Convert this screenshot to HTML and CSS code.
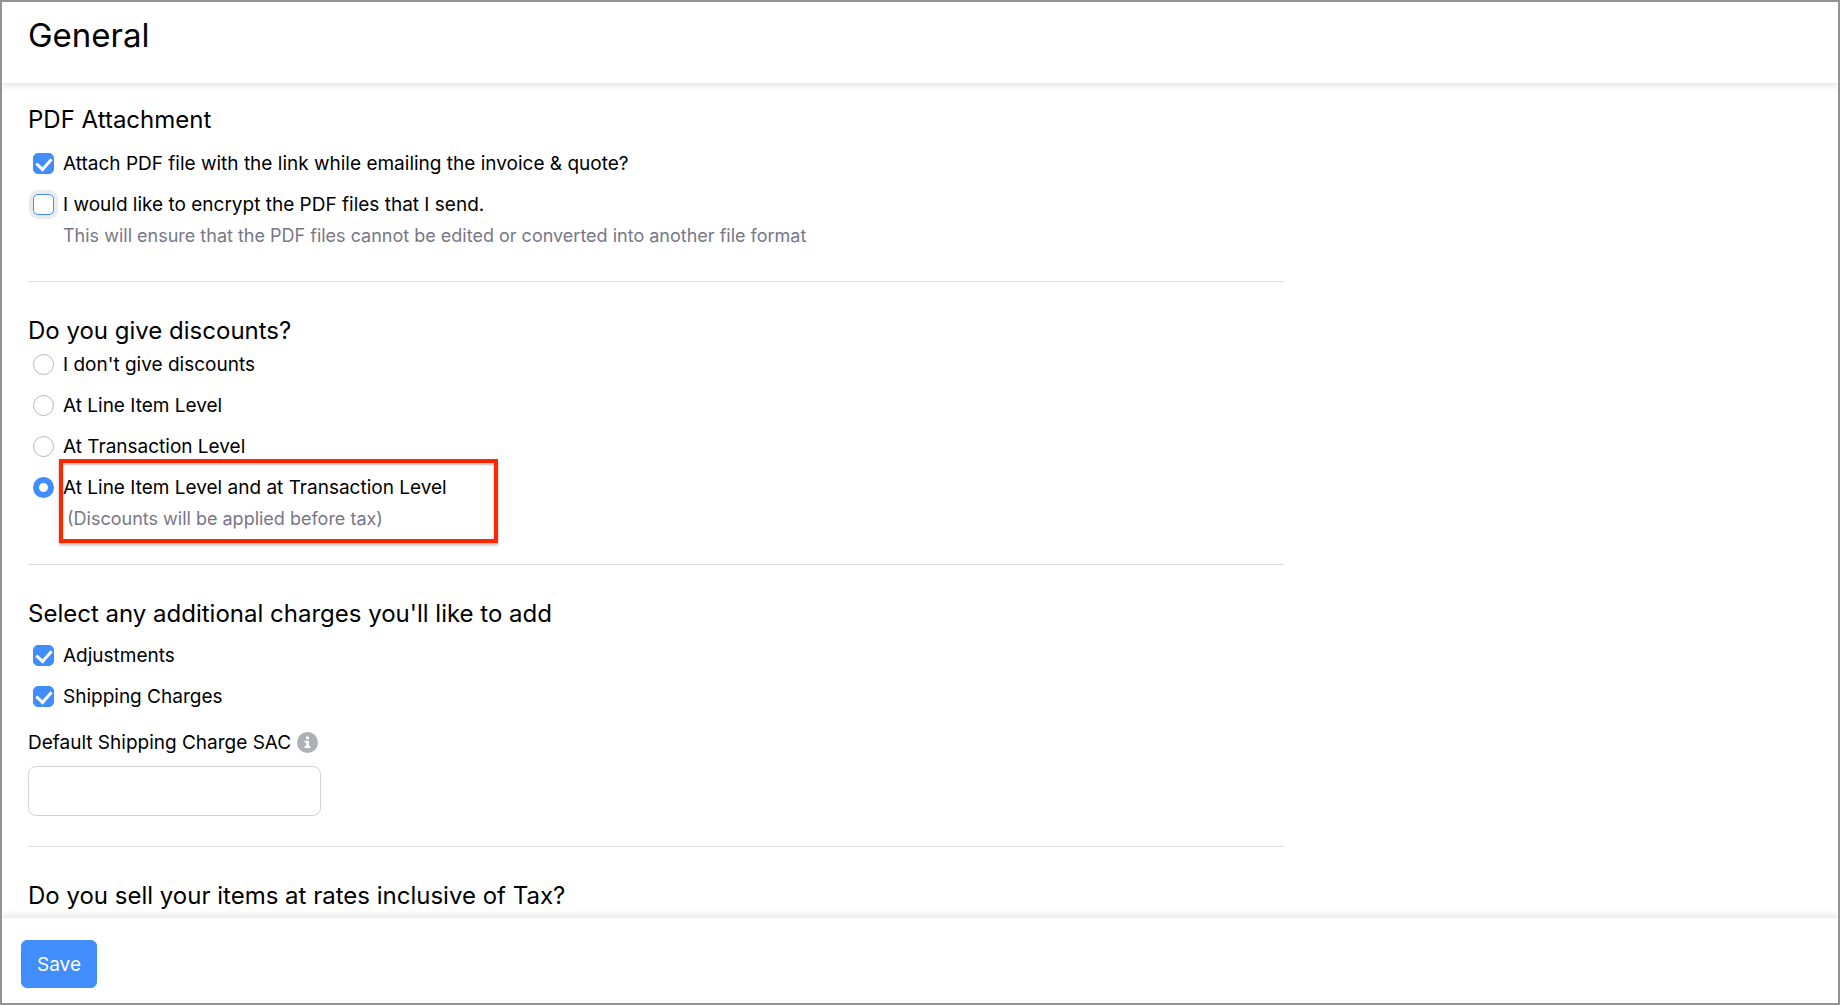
FILE: index.html
```html
<!DOCTYPE html>
<html lang="en">
<head>
  <meta charset="UTF-8">
  <meta name="viewport" content="width=device-width, initial-scale=1.0">
  <title>General</title>
  <link rel="stylesheet" href="styles.css">
</head>
<body>
  <header class="page-header">
    <h1>General</h1>
  </header>

  <main class="page-content">
    <form id="preferences">
      <section class="pref-section">
        <h2 class="spaced-lg">PDF Attachment</h2>
        <div class="option">
          <input type="checkbox" id="attach-pdf" checked>
          <label for="attach-pdf">Attach PDF file with the link while emailing the invoice &amp; quote?</label>
        </div>
        <div class="option">
          <input type="checkbox" id="encrypt-pdf" class="focused" aria-describedby="encrypt-hint">
          <label for="encrypt-pdf">I would like to encrypt the PDF files that I send.</label>
        </div>
        <p class="hint" id="encrypt-hint">This will ensure that the PDF files cannot be edited or converted into another file format</p>
      </section>

      <section class="pref-section">
        <h2>Do you give discounts?</h2>
        <div class="option">
          <input type="radio" name="discount" id="discount-none">
          <label for="discount-none">I don't give discounts</label>
        </div>
        <div class="option">
          <input type="radio" name="discount" id="discount-item">
          <label for="discount-item">At Line Item Level</label>
        </div>
        <div class="option">
          <input type="radio" name="discount" id="discount-transaction">
          <label for="discount-transaction">At Transaction Level</label>
        </div>
        <div class="option-group">
          <div class="option">
            <input type="radio" name="discount" id="discount-both" aria-describedby="discount-hint" checked>
            <label for="discount-both">At Line Item Level and at Transaction Level</label>
          </div>
          <p class="hint hint-indent" id="discount-hint">(Discounts will be applied before tax)</p>
          <span class="highlight"></span>
        </div>
      </section>

      <section class="pref-section charges">
        <h2 class="spaced">Select any additional charges you'll like to add</h2>
        <div class="option">
          <input type="checkbox" id="adjustments" checked>
          <label for="adjustments">Adjustments</label>
        </div>
        <div class="option">
          <input type="checkbox" id="shipping" checked>
          <label for="shipping">Shipping Charges</label>
        </div>
        <div class="field">
          <div class="field-label">
            <label for="sac">Default Shipping Charge SAC</label>
            <svg class="info-icon" viewBox="0 0 20 20" aria-hidden="true">
              <circle cx="10" cy="10" r="10" fill="#afafb7"/>
              <path d="M8.6 4.4h2.8v2.5H8.6zM7.3 8.3h4.1v5h1.4v1.9H7.2v-1.9h1.5v-3.1H7.3z" fill="#fff"/>
            </svg>
          </div>
          <input type="text" id="sac" name="sac">
        </div>
      </section>

      <section class="pref-section">
        <h2>Do you sell your items at rates inclusive of Tax?</h2>
      </section>
    </form>
  </main>

  <footer class="page-footer">
    <button type="submit" form="preferences" class="btn-save">Save</button>
  </footer>
</body>
</html>
```
FILE: styles.css
```css
* {
  box-sizing: border-box;
}
body {
  margin: 0;
  height: 100vh;
  display: flex;
  flex-direction: column;
  overflow: hidden;
  border: 2px solid #929292;
  background: #fff;
  color: #000;
  font-family: Inter, "Liberation Sans", sans-serif;
  font-size: 19px;
}
h1, h2, p {
  margin: 0;
  font-weight: 400;
}
.page-header {
  flex: none;
  padding: 13px 26px 28px;
  box-shadow: 0 3px 6px rgba(0, 0, 0, 0.1);
}
h1 {
  font-size: 33px;
  line-height: 40px;
}
h2 {
  font-size: 24px;
  line-height: 26px;
}
.spaced {
  margin-bottom: 8px;
}
.spaced-lg {
  margin-bottom: 10px;
}

/* sections */
.page-content {
  flex: 1;
  min-height: 0;
  overflow: hidden;
  padding: 0 26px;
}
.pref-section {
  max-width: 1256px;
  padding: 36px 0 35px;
  border-bottom: 1px solid #e0e0e2;
}
.pref-section:first-child {
  padding-top: 24px;
}
.charges {
  padding-bottom: 30px;
}
.option {
  display: flex;
  align-items: center;
  gap: 9px;
  height: 41px;
  padding-left: 5px;
}
.option-group {
  position: relative;
}
.hint {
  padding-left: 35px;
  color: #777786;
  font-size: 18px;
  line-height: 21px;
}
.hint-indent {
  padding-left: 39px;
}
.highlight {
  position: absolute;
  top: -8px;
  left: 31px;
  width: 439px;
  height: 84px;
  border: 4px solid #ff2600;
  box-shadow: 0 2px 3px rgba(0, 0, 0, 0.3), inset 0 2px 2px rgba(0, 0, 0, 0.25);
  pointer-events: none;
}

/* controls */
input[type="checkbox"],
input[type="radio"] {
  appearance: none;
  flex: none;
  display: grid;
  place-items: center;
  width: 21px;
  height: 21px;
  margin: 0;
  border: 1px solid #b8b8bd;
  border-radius: 5px;
  background: #fff;
}
input[type="radio"] {
  border-radius: 50%;
}
input[type="radio"]:checked {
  border: 6px solid #408dfb;
}
input[type="checkbox"]:checked {
  border-color: #408dfb;
  background: #408dfb;
}
input[type="checkbox"]:checked::after {
  content: "";
  width: 7px;
  height: 12px;
  margin-bottom: 3px;
  border: solid #fff;
  border-width: 0 3px 3px 0;
  transform: rotate(42deg);
}
input[type="checkbox"].focused {
  border-color: #408dfb;
  box-shadow: 0 0 0 4px #ebebed;
}
.field {
  padding-top: 11px;
}
.field-label {
  display: flex;
  align-items: center;
  gap: 6px;
  height: 28px;
  margin-bottom: 10px;
}
.info-icon {
  width: 21px;
  height: 21px;
}
input[type="text"] {
  display: block;
  width: 293px;
  height: 50px;
  padding: 0 12px;
  border: 1px solid #d3d3da;
  border-radius: 8px;
  font: inherit;
}

/* bottom bar */
.page-footer {
  flex: none;
  padding: 22px 19px 15px;
  box-shadow: 0 -3px 6px rgba(0, 0, 0, 0.1);
}
.btn-save {
  display: block;
  height: 48px;
  padding: 0 15px;
  border: 1px solid #408dfb;
  border-radius: 6px;
  background: #408dfb;
  color: #fff;
  font: inherit;
  cursor: pointer;
}
```
